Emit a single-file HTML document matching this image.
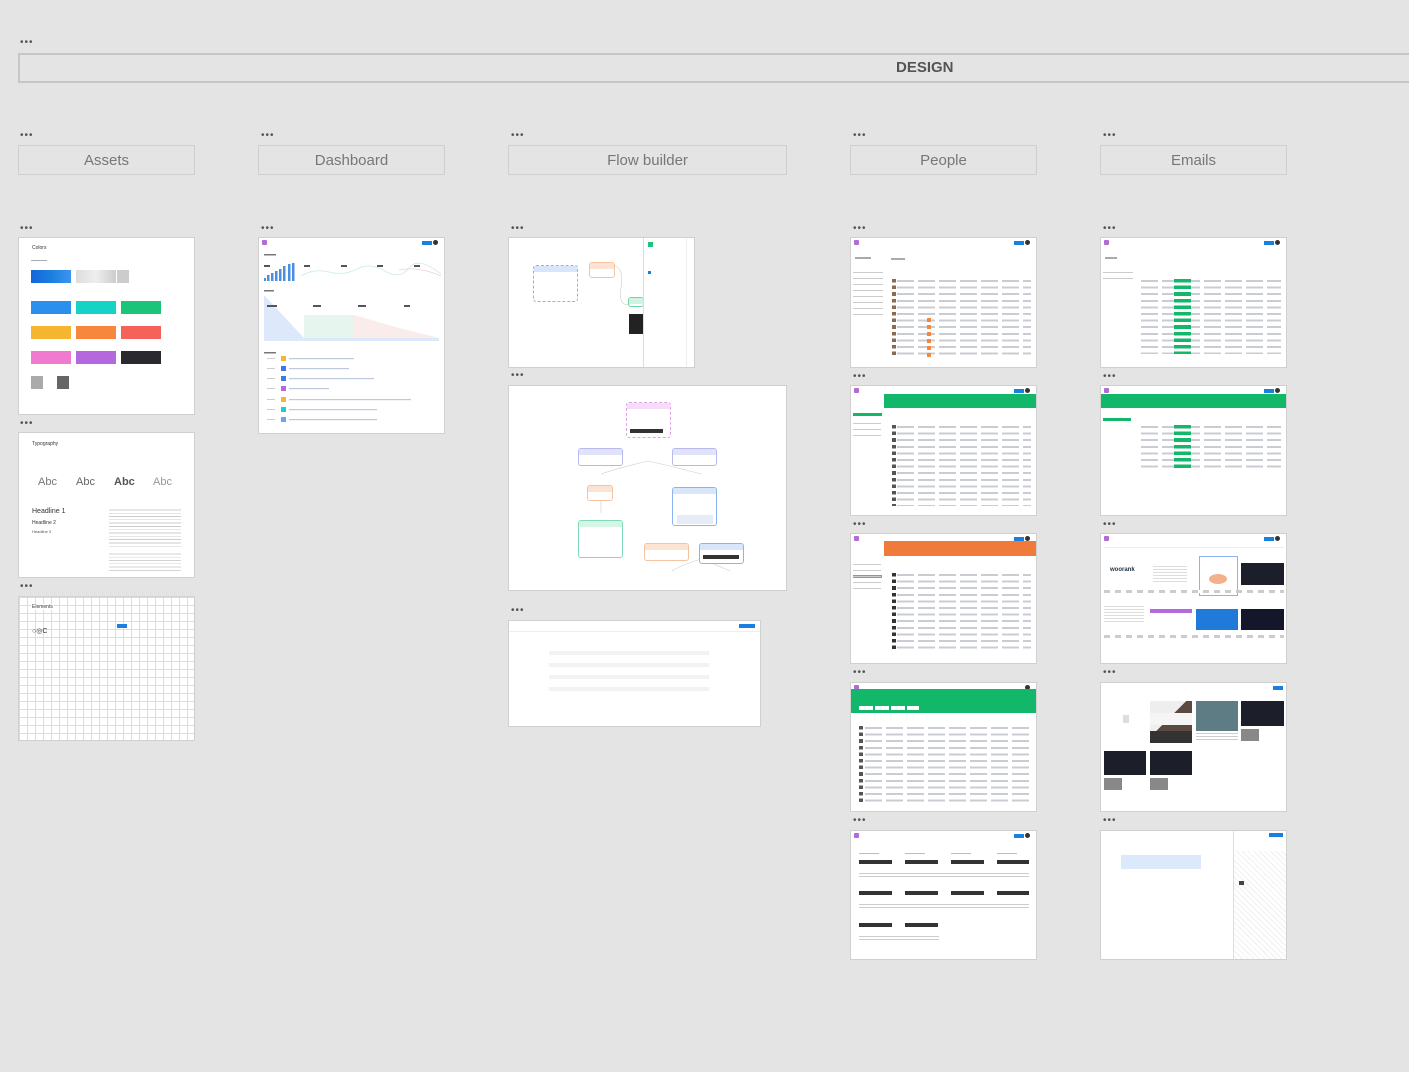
<!DOCTYPE html>
<html><head><meta charset="utf-8"><style>
*{margin:0;padding:0;box-sizing:border-box}
body{width:1409px;height:1072px;background:#e4e4e4;position:relative;overflow:hidden;font-family:"Liberation Sans",sans-serif}
.a{position:absolute}
.dots{position:absolute;font-size:10px;color:#555;letter-spacing:1px;line-height:6px}
.lbl{position:absolute;height:30px;top:145px;border:1px solid #cfcfcf;color:#777;font-size:15px;text-align:center;line-height:30px}
.fr{position:absolute;background:#fff;border:1px solid #d0d0d0;overflow:hidden}
.rows{position:absolute;background:repeating-linear-gradient(transparent 0 4px,#c9cdd3 4px 6px,transparent 6px 6.6px)}
.gap{position:absolute;inset:0;background:repeating-linear-gradient(90deg,transparent 0 17px,#fff 17px 21px)}
.sw{position:absolute;height:13px}
.node{position:absolute;background:#fff;border:1px solid #bbb;border-radius:3px}
.nh{height:6px;border-radius:2px 2px 0 0}
.top{position:absolute;left:0;right:0;top:0;height:10px}
.ico{position:absolute;left:3px;top:2px;width:5px;height:5px;background:#b36ad8;border-radius:1px}
.btn{position:absolute;right:12px;top:3px;width:10px;height:4px;background:#1a7fe0}
.av{position:absolute;right:6px;top:2px;width:5px;height:5px;background:#333;border-radius:50%}
.tl{position:absolute;left:30px;height:2px;width:10px;background:#aaa}
</style></head><body>

<div class="dots" style="left:20px;top:40px">•••</div>
<div class="a" style="left:18px;top:53px;width:1400px;height:30px;border:2px solid #c6c6c6"></div>
<div class="a" style="left:896px;top:59px;font-size:15px;font-weight:bold;color:#555">DESIGN</div>

<div class="dots" style="left:20px;top:133px">•••</div>
<div class="dots" style="left:261px;top:133px">•••</div>
<div class="dots" style="left:511px;top:133px">•••</div>
<div class="dots" style="left:853px;top:133px">•••</div>
<div class="dots" style="left:1103px;top:133px">•••</div>
<div class="lbl" style="left:18px;width:177px">Assets</div>
<div class="lbl" style="left:258px;width:187px">Dashboard</div>
<div class="lbl" style="left:508px;width:279px">Flow builder</div>
<div class="lbl" style="left:850px;width:187px">People</div>
<div class="lbl" style="left:1100px;width:187px">Emails</div>

<!-- Assets -->
<div class="dots" style="left:20px;top:226px">•••</div>
<div class="fr" style="left:18px;top:237px;width:177px;height:178px">
 <div class="a" style="left:13px;top:7px;font-size:5px;color:#333">Colors</div>
 <div class="tl" style="left:12px;top:22px;width:16px;height:1px"></div>
 <div class="sw" style="left:12px;top:32px;width:40px;background:linear-gradient(90deg,#1565d8,#1a7fe0 50%,#3d95ef)"></div>
 <div class="sw" style="left:57px;top:32px;width:40px;background:linear-gradient(90deg,#ddd,#eee 50%,#ccc)"></div>
 <div class="sw" style="left:98px;top:32px;width:12px;background:#ccc"></div>
 <div class="sw" style="left:12px;top:63px;width:40px;background:#2b8fed"></div>
 <div class="sw" style="left:57px;top:63px;width:40px;background:#17d3c6"></div>
 <div class="sw" style="left:102px;top:63px;width:40px;background:#1cc47a"></div>
 <div class="sw" style="left:12px;top:88px;width:40px;background:#f5b531"></div>
 <div class="sw" style="left:57px;top:88px;width:40px;background:#f7873d"></div>
 <div class="sw" style="left:102px;top:88px;width:40px;background:#f4625a"></div>
 <div class="sw" style="left:12px;top:113px;width:40px;background:#f07ad0"></div>
 <div class="sw" style="left:57px;top:113px;width:40px;background:#b567dd"></div>
 <div class="sw" style="left:102px;top:113px;width:40px;background:#2a2a2e"></div>
 <div class="sw" style="left:12px;top:138px;width:12px;background:#aaa"></div>
 <div class="sw" style="left:38px;top:138px;width:12px;background:#666"></div>
</div>
<div class="dots" style="left:20px;top:421px">•••</div>
<div class="fr" style="left:18px;top:432px;width:177px;height:146px">
 <div class="a" style="left:13px;top:8px;font-size:5px;color:#333">Typography</div>
 <div class="a" style="left:19px;top:43px;font-size:11px;color:#777">Abc</div>
 <div class="a" style="left:57px;top:43px;font-size:11px;color:#666">Abc</div>
 <div class="a" style="left:95px;top:43px;font-size:11px;color:#555;font-weight:bold">Abc</div>
 <div class="a" style="left:134px;top:43px;font-size:11px;color:#999">Abc</div>
 <div class="a" style="left:13px;top:75px;font-size:7px;color:#333">Headline 1</div>
 <div class="a" style="left:13px;top:87px;font-size:5px;color:#333">Headline 2</div>
 <div class="a" style="left:13px;top:96px;font-size:4px;color:#555">Headline 3</div>
 <div class="a" style="left:90px;top:74px;width:72px;height:40px;background:repeating-linear-gradient(#fff 0 2.5px,#ccc 2.5px 3.3px)"></div>
 <div class="a" style="left:90px;top:118px;width:72px;height:20px;background:repeating-linear-gradient(#fff 0 2.5px,#d3d3d3 2.5px 3.3px)"></div>
</div>
<div class="dots" style="left:20px;top:584px">•••</div>
<div class="fr" style="left:18px;top:596px;width:177px;height:145px;background-color:#fff;background-image:linear-gradient(90deg,#dcdcdc 1px,transparent 1px),linear-gradient(#dcdcdc 1px,transparent 1px);background-size:8px 8px">
 <div class="a" style="left:12px;top:7px;font-size:5px;color:#333;background:#fff;padding:0 1px">Elements</div>
 <div class="a" style="left:13px;top:30px;font-size:7px;color:#333">○◎C</div>
 <div class="a" style="left:98px;top:27px;width:10px;height:4px;background:#1a7fe0"></div>
</div>

<!-- Dashboard -->
<div class="dots" style="left:261px;top:226px">•••</div>
<div class="fr" style="left:258px;top:237px;width:187px;height:197px">
 <div class="top"><div class="ico"></div><div class="btn"></div><div class="av"></div></div>
 <svg class="a" style="left:0;top:0" width="187" height="197">
  <g fill="#4a90e2"><rect x="5" y="40" width="2" height="3"/><rect x="8" y="37" width="2.5" height="6"/><rect x="12" y="35" width="2.5" height="8"/><rect x="16" y="33" width="2.5" height="10"/><rect x="20" y="31" width="2.5" height="12"/><rect x="24" y="28" width="2.5" height="15"/><rect x="29" y="26" width="2.5" height="17"/><rect x="33" y="25" width="2.5" height="18"/></g>
  <path d="M42 38 Q55 30 70 34 T98 31 T126 33 T150 30 T182 36" stroke="#cdeedd" fill="none" stroke-width=".8"/>
  <path d="M140 32 Q160 28 182 38" stroke="#f6d0d0" fill="none" stroke-width=".8"/>
  <g fill="#555"><rect x="5" y="27" width="6" height="2"/><rect x="45" y="27" width="6" height="2"/><rect x="82" y="27" width="6" height="2"/><rect x="118" y="27" width="6" height="2"/><rect x="155" y="27" width="6" height="2"/></g>
  <rect x="5" y="16" width="12" height="1.5" fill="#777"/>
  <rect x="5" y="52" width="10" height="1.5" fill="#777"/>
  <path d="M5 57 L45 100 L180 100 L180 103 L5 103Z" fill="#dde9fb"/>
  <path d="M45 77 L95 77 L140 90 L180 100 L45 100Z" fill="#e6f6ee"/>
  <path d="M95 77 L140 90 L180 100 L95 100Z" fill="#fbecec"/>
  <g fill="#555"><rect x="8" y="67" width="10" height="2"/><rect x="54" y="67" width="8" height="2"/><rect x="99" y="67" width="8" height="2"/><rect x="145" y="67" width="6" height="2"/></g>
  <rect x="5" y="114" width="12" height="1.5" fill="#777"/>
  <g>
   <rect x="22" y="118" width="5" height="5" fill="#f5b531"/><rect x="22" y="128" width="5" height="5" fill="#3d7be0"/><rect x="22" y="138" width="5" height="5" fill="#3d7be0"/><rect x="22" y="148" width="5" height="5" fill="#b567dd"/><rect x="22" y="159" width="5" height="5" fill="#f5b531"/><rect x="22" y="169" width="5" height="5" fill="#17d3c6"/><rect x="22" y="179" width="5" height="5" fill="#6fa3f0"/>
  </g>
  <g fill="#bcc8dc"><rect x="30" y="120" width="65" height="1.2"/><rect x="30" y="130" width="60" height="1.2"/><rect x="30" y="140" width="85" height="1.2"/><rect x="30" y="150" width="40" height="1.2"/><rect x="30" y="161" width="122" height="1.2"/><rect x="30" y="171" width="88" height="1.2"/><rect x="30" y="181" width="88" height="1.2"/></g>
  <g fill="#ccc"><rect x="8" y="120" width="8" height="1"/><rect x="8" y="130" width="8" height="1"/><rect x="8" y="140" width="8" height="1"/><rect x="8" y="150" width="8" height="1"/><rect x="8" y="161" width="8" height="1"/><rect x="8" y="171" width="8" height="1"/><rect x="8" y="181" width="8" height="1"/></g>
 </svg>
</div>

<!-- Flow builder -->
<div class="dots" style="left:511px;top:226px">•••</div>
<div class="dots" style="left:511px;top:373px">•••</div>
<div class="fr" style="left:508px;top:237px;width:187px;height:131px">
 <svg class="a" style="left:0;top:0" width="187" height="131"><path d="M106 28 Q115 30 112 50 T122 66" stroke="#ccc" fill="none" stroke-width=".6"/></svg>
 <div class="node" style="left:24px;top:27px;width:45px;height:37px;border:1px dashed #8ab4f0"><div class="nh" style="background:#d8e6fb"></div></div>
 <div class="node" style="left:80px;top:24px;width:26px;height:16px;border-color:#f5c3a0"><div class="nh" style="background:#fde3d1"></div></div>
 <div class="node" style="left:119px;top:59px;width:16px;height:10px;border-color:#6fd6a8"><div class="nh" style="background:#d0f3e2"></div></div>
 <div class="a" style="left:120px;top:76px;width:14px;height:20px;background:#222"></div>
 <div class="a" style="left:134px;top:0;width:1px;height:131px;background:#ddd"></div>
 <div class="a" style="left:139px;top:4px;width:5px;height:5px;background:#1cc47a"></div>
 <div class="a" style="left:139px;top:33px;width:3px;height:3px;background:#1a7fe0"></div>
 <div class="a" style="left:177px;top:0;width:1px;height:131px;background:#eee"></div>
</div>
<div class="dots" style="left:511px;top:608px">•••</div>
<div class="fr" style="left:508px;top:385px;width:279px;height:206px">
 <svg class="a" style="left:0;top:0" width="279" height="206"><g stroke="#ccc" fill="none" stroke-width=".6"><path d="M139 75 Q110 82 92 88 M139 75 Q170 82 192 88 M92 108 V127 M92 160 V170 M192 108 V128 M192 173 Q170 180 163 185 M192 173 Q210 180 221 185"/></g></svg>
 <div class="node" style="left:117px;top:16px;width:45px;height:36px;border:1px dashed #e0a0e8"><div class="nh" style="background:#f6dcf9"></div><div class="a" style="left:3px;top:26px;width:33px;height:4px;background:#333"></div></div>
 <div class="node" style="left:69px;top:62px;width:45px;height:18px;border-color:#b6b8f0"><div class="nh" style="background:#e2e3fb"></div></div>
 <div class="node" style="left:163px;top:62px;width:45px;height:18px;border-color:#b6b8f0"><div class="nh" style="background:#e2e3fb"></div></div>
 <div class="node" style="left:78px;top:99px;width:26px;height:16px;border-color:#f5c3a0"><div class="nh" style="background:#fde3d1"></div></div>
 <div class="node" style="left:163px;top:101px;width:45px;height:39px;border-color:#8ab4f0"><div class="nh" style="background:#d8e6fb"></div><div class="a" style="left:4px;top:27px;width:36px;height:9px;background:#e6ecf6"></div></div>
 <div class="node" style="left:69px;top:134px;width:45px;height:38px;border-color:#7fdcb6"><div class="nh" style="background:#d6f5e7"></div></div>
 <div class="node" style="left:135px;top:157px;width:45px;height:18px;border-color:#f5c3a0"><div class="nh" style="background:#fde3d1"></div></div>
 <div class="node" style="left:190px;top:157px;width:45px;height:21px;border-color:#8ab4f0"><div class="nh" style="background:#d8e6fb"></div><div class="a" style="left:3px;top:11px;width:36px;height:4px;background:#333"></div></div>
</div>
<div class="fr" style="left:508px;top:620px;width:253px;height:107px">
 <div class="a" style="left:230px;top:3px;width:16px;height:4px;background:#1a7fe0"></div>
 <div class="a" style="left:0;top:10px;width:253px;height:1px;background:#eee"></div>
 <div class="rows" style="left:40px;top:26px;width:160px;height:50px;background:repeating-linear-gradient(#fff 0 4px,#f1f2f4 4px 8px,#fff 8px 12px)"></div>
</div>

<!-- People & Emails dots -->
<div class="dots" style="left:853px;top:226px">•••</div>
<div class="dots" style="left:853px;top:374px">•••</div>
<div class="dots" style="left:853px;top:522px">•••</div>
<div class="dots" style="left:853px;top:670px">•••</div>
<div class="dots" style="left:853px;top:818px">•••</div>
<div class="dots" style="left:1103px;top:226px">•••</div>
<div class="dots" style="left:1103px;top:374px">•••</div>
<div class="dots" style="left:1103px;top:522px">•••</div>
<div class="dots" style="left:1103px;top:670px">•••</div>
<div class="dots" style="left:1103px;top:818px">•••</div>

<!-- People 1 -->
<div class="fr" style="left:850px;top:237px;width:187px;height:131px">
 <div class="top"><div class="ico"></div><div class="btn"></div><div class="av"></div></div>
 <div class="tl" style="left:4px;top:19px;width:16px"></div><div class="tl" style="left:40px;top:20px;width:14px"></div>
 <div class="a" style="left:2px;top:30px;width:30px;height:50px;background:repeating-linear-gradient(transparent 0 4px,#ccc 4px 5px,transparent 5px 6px)"></div>
 <div class="rows" style="left:46px;top:38px;width:134px;height:82px"><div class="gap"></div></div>
 <div class="a" style="left:41px;top:38px;width:4px;height:82px;background:repeating-linear-gradient(transparent 0 3px,#8a6a50 3px 6.6px)"></div>
 <div class="a" style="left:76px;top:80px;width:4px;height:40px;background:repeating-linear-gradient(#f7873d 0 4px,transparent 4px 7px)"></div>
</div>
<div class="fr" style="left:850px;top:385px;width:187px;height:131px">
 <div class="top"><div class="ico"></div><div class="btn"></div><div class="av"></div></div>
 <div class="a" style="left:33px;top:8px;width:154px;height:14px;background:#12b76a"></div>
 <div class="a" style="left:2px;top:27px;width:29px;height:3px;background:#12b76a"></div>
 <div class="a" style="left:2px;top:33px;width:28px;height:20px;background:repeating-linear-gradient(transparent 0 4px,#ccc 4px 5px,transparent 5px 6px)"></div>
 <div class="rows" style="left:46px;top:36px;width:134px;height:84px"><div class="gap"></div></div>
 <div class="a" style="left:41px;top:36px;width:4px;height:84px;background:repeating-linear-gradient(transparent 0 3px,#555 3px 6.6px)"></div>
</div>
<div class="fr" style="left:850px;top:533px;width:187px;height:131px">
 <div class="top"><div class="ico"></div><div class="btn"></div><div class="av"></div></div>
 <div class="a" style="left:33px;top:7px;width:154px;height:15px;background:#f07a3c"></div>
 <div class="a" style="left:2px;top:41px;width:29px;height:3px;background:#f07a3c"></div>
 <div class="a" style="left:2px;top:26px;width:28px;height:30px;background:repeating-linear-gradient(transparent 0 4px,#ccc 4px 5px,transparent 5px 6px)"></div>
 <div class="rows" style="left:46px;top:36px;width:134px;height:80px"><div class="gap"></div></div>
 <div class="a" style="left:41px;top:36px;width:4px;height:80px;background:repeating-linear-gradient(transparent 0 3px,#333 3px 6.6px)"></div>
</div>
<div class="fr" style="left:850px;top:682px;width:187px;height:130px">
 <div class="top"><div class="ico"></div><div class="av"></div></div>
 <div class="a" style="left:0;top:6px;width:187px;height:24px;background:#12b76a"></div>
 <div class="a" style="left:8px;top:23px;width:60px;height:4px;background:repeating-linear-gradient(90deg,#fff 0 14px,transparent 14px 16px)"></div>
 <div class="rows" style="left:14px;top:40px;width:166px;height:80px"><div class="gap"></div></div>
 <div class="a" style="left:8px;top:40px;width:4px;height:80px;background:repeating-linear-gradient(transparent 0 3px,#555 3px 6.6px)"></div>
</div>
<div class="fr" style="left:850px;top:830px;width:187px;height:130px">
 <div class="top"><div class="ico"></div><div class="btn"></div><div class="av"></div></div>
 <div class="a" style="left:8px;top:29px;width:170px;height:4px;background:repeating-linear-gradient(90deg,#333 0 33px,#fff 33px 46px)"></div>
 <div class="a" style="left:8px;top:60px;width:170px;height:4px;background:repeating-linear-gradient(90deg,#333 0 33px,#fff 33px 46px)"></div>
 <div class="a" style="left:8px;top:92px;width:80px;height:4px;background:repeating-linear-gradient(90deg,#333 0 33px,#fff 33px 46px)"></div>
 <div class="a" style="left:8px;top:22px;width:170px;height:1px;background:repeating-linear-gradient(90deg,#bbb 0 20px,#fff 20px 46px)"></div>
 <div class="a" style="left:8px;top:40px;width:170px;height:6px;background:repeating-linear-gradient(transparent 0 2px,#ccc 2px 3px),repeating-linear-gradient(90deg,transparent 0 12px,#fff 12px 15px)"></div>
 <div class="a" style="left:8px;top:71px;width:170px;height:6px;background:repeating-linear-gradient(transparent 0 2px,#ccc 2px 3px)"></div>
 <div class="a" style="left:8px;top:103px;width:80px;height:6px;background:repeating-linear-gradient(transparent 0 2px,#ccc 2px 3px)"></div>
</div>

<!-- Emails -->
<div class="fr" style="left:1100px;top:237px;width:187px;height:131px">
 <div class="top"><div class="ico"></div><div class="btn"></div><div class="av"></div></div>
 <div class="tl" style="left:4px;top:19px;width:12px"></div>
 <div class="a" style="left:2px;top:30px;width:30px;height:12px;background:repeating-linear-gradient(transparent 0 4px,#ccc 4px 5px,transparent 5px 6px)"></div>
 <div class="rows" style="left:40px;top:38px;width:140px;height:78px"><div class="gap"></div></div>
 <div class="a" style="left:73px;top:38px;width:17px;height:78px;background:repeating-linear-gradient(transparent 0 3px,#12b76a 3px 6.6px)"></div>
</div>
<div class="fr" style="left:1100px;top:385px;width:187px;height:131px">
 <div class="top"><div class="ico"></div><div class="btn"></div><div class="av"></div></div>
 <div class="a" style="left:0;top:8px;width:187px;height:14px;background:#12b76a"></div>
 <div class="a" style="left:2px;top:32px;width:28px;height:3px;background:#12b76a"></div>
 <div class="rows" style="left:40px;top:36px;width:140px;height:46px"><div class="gap"></div></div>
 <div class="a" style="left:73px;top:36px;width:17px;height:46px;background:repeating-linear-gradient(transparent 0 3px,#12b76a 3px 6.6px)"></div>
</div>
<div class="fr" style="left:1100px;top:533px;width:187px;height:131px">
 <div class="top"><div class="ico"></div><div class="btn"></div><div class="av"></div></div>
 <div class="a" style="left:3px;top:13px;width:180px;height:1px;background:#eee"></div>
 <div class="a" style="left:9px;top:33px;font-size:6px;font-weight:bold;color:#234">woorank</div>
 <div class="a" style="left:52px;top:30px;width:34px;height:20px;background:repeating-linear-gradient(transparent 0 2px,#ddd 2px 3px)"></div>
 <div class="a" style="left:98px;top:22px;width:39px;height:40px;border:1px solid #8ab4f0;background:#fff"></div>
 <div class="a" style="left:108px;top:40px;width:18px;height:10px;background:#f4b08a;border-radius:50%"></div>
 <div class="a" style="left:140px;top:29px;width:43px;height:22px;background:#1c1f2a"></div>
 <div class="a" style="left:3px;top:70px;width:40px;height:20px;background:repeating-linear-gradient(transparent 0 2px,#ddd 2px 3px)"></div>
 <div class="a" style="left:49px;top:75px;width:42px;height:4px;background:#b567dd"></div>
 <div class="a" style="left:95px;top:75px;width:42px;height:21px;background:#1f7ad9"></div>
 <div class="a" style="left:140px;top:75px;width:43px;height:21px;background:#14172a"></div>
 <div class="a" style="left:3px;top:56px;width:180px;height:3px;background:repeating-linear-gradient(90deg,#ccc 0 6px,#fff 6px 11px)"></div>
 <div class="a" style="left:3px;top:101px;width:180px;height:3px;background:repeating-linear-gradient(90deg,#ccc 0 6px,#fff 6px 11px)"></div>
</div>
<div class="fr" style="left:1100px;top:682px;width:187px;height:130px">
 <div class="a" style="left:172px;top:3px;width:10px;height:4px;background:#1a7fe0"></div>
 <div class="a" style="left:22px;top:32px;width:6px;height:8px;background:#ddd"></div>
 <div class="a" style="left:49px;top:18px;width:42px;height:30px;background:linear-gradient(135deg,#eee 50%,#5a4a40 50%)"></div>
 <div class="a" style="left:49px;top:30px;width:42px;height:12px;background:#f5f5f5"></div>
 <div class="a" style="left:49px;top:48px;width:42px;height:12px;background:#333"></div>
 <div class="a" style="left:95px;top:18px;width:42px;height:30px;background:#5e7c84"></div>
 <div class="a" style="left:95px;top:48px;width:42px;height:10px;background:repeating-linear-gradient(transparent 0 2px,#ccc 2px 3px)"></div>
 <div class="a" style="left:140px;top:18px;width:43px;height:25px;background:#1c1f2a"></div>
 <div class="a" style="left:140px;top:46px;width:18px;height:12px;background:#888"></div>
 <div class="a" style="left:3px;top:68px;width:42px;height:24px;background:#1c1f2a"></div>
 <div class="a" style="left:49px;top:68px;width:42px;height:24px;background:#1c1f2a"></div>
 <div class="a" style="left:3px;top:95px;width:18px;height:12px;background:#888"></div>
 <div class="a" style="left:49px;top:95px;width:18px;height:12px;background:#888"></div>
</div>
<div class="fr" style="left:1100px;top:830px;width:187px;height:130px">
 <div class="a" style="left:168px;top:2px;width:14px;height:4px;background:#1a7fe0"></div>
 <div class="a" style="left:20px;top:24px;width:80px;height:14px;background:#dbe9fa"></div>
 <div class="a" style="left:132px;top:0;width:1px;height:130px;background:#ddd"></div>
 <div class="a" style="left:133px;top:20px;width:54px;height:110px;background:repeating-linear-gradient(45deg,#fff 0 3px,#f0f0f4 3px 4px)"></div>
 <div class="a" style="left:138px;top:50px;width:5px;height:4px;background:#444"></div>
</div>
</body></html>
